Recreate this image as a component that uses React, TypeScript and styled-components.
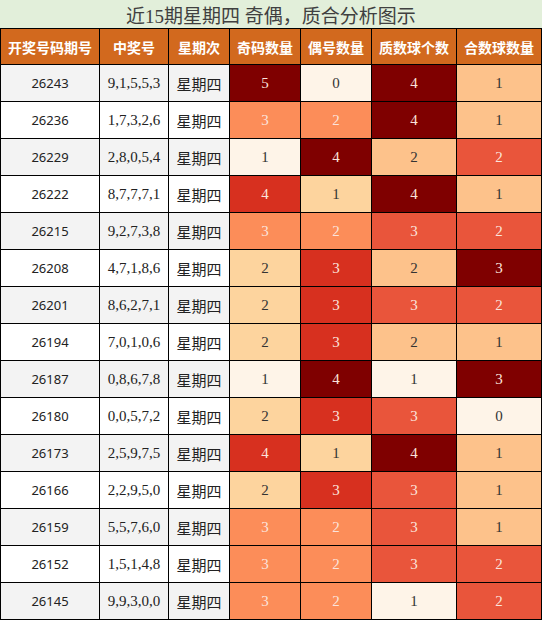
import React from 'react';
import styled, { createGlobalStyle } from 'styled-components';

const Global = createGlobalStyle`
  html, body { margin: 0; padding: 0; background: #fff; }
`;

const Page = styled.div`
  width: 542px;
`;

const Title = styled.div`
  height: 28px;
  background: #e2efda;
  border-bottom: 1px solid #000;
  display: flex;
  align-items: center;
  justify-content: center;
  font-family: "Liberation Serif", "Noto Sans CJK SC", serif;
  font-size: 19px;
  color: #404040;
`;

const Grid = styled.div`
  display: grid;
  grid-template-columns: 98px 68px 60px 70px 70px 84px 84px;
  grid-template-rows: 35px;
  grid-auto-rows: 36px;
  gap: 1px;
  background: #000;
  padding: 0 1px 1px 1px;
`;

const HeadCell = styled.div`
  background: #d2691e;
  color: #fff;
  font-family: "Noto Sans CJK SC", sans-serif;
  font-weight: bold;
  font-size: 14px;
  display: flex;
  align-items: center;
  justify-content: center;
  white-space: nowrap;
`;

type Kind = 'period' | 'nums' | 'day';

const fontFor: Record<Kind, string> = {
  period: `font-family: "Noto Sans", sans-serif; font-size: 13px;`,
  nums: `font-family: "Liberation Serif", serif; font-size: 15px;`,
  day: `font-family: "Noto Sans CJK SC", sans-serif; font-size: 15px;`,
};

const InfoCell = styled.div<{ $alt: boolean; $kind: Kind }>`
  background: ${(p) => (p.$alt ? '#f3f3f3' : '#fff')};
  color: #222;
  display: flex;
  align-items: center;
  justify-content: center;
  white-space: nowrap;
  ${(p) => fontFor[p.$kind]}
`;

const HeatCell = styled.div<{ $bg: string; $light: boolean }>`
  background: ${(p) => p.$bg};
  color: ${(p) => (p.$light ? '#333' : '#fbe3dc')};
  display: flex;
  align-items: center;
  justify-content: center;
  font-family: "Liberation Serif", serif;
  font-size: 15px;
`;

const C = {
  cream: '#fef4e8',
  peach: '#fdd49e',
  lt: '#fdc28b',
  org: '#fc8d59',
  red2: '#e9553b',
  red: '#d7301f',
  dark: '#7f0000',
};
const LIGHT = new Set([C.cream, C.peach, C.lt]);

const maps: Record<number, string>[] = [
  { 1: C.cream, 2: C.peach, 3: C.org, 4: C.red, 5: C.dark },
  { 0: C.cream, 1: C.peach, 2: C.org, 3: C.red, 4: C.dark },
  { 1: C.cream, 2: C.lt, 3: C.red2, 4: C.dark },
  { 0: C.cream, 1: C.lt, 2: C.red2, 3: C.dark },
];

const headers = ['开奖号码期号', '中奖号', '星期次', '奇码数量', '偶号数量', '质数球个数', '合数球数量'];

const rows: [string, string, number[]][] = [
  ['26243', '9,1,5,5,3', [5, 0, 4, 1]],
  ['26236', '1,7,3,2,6', [3, 2, 4, 1]],
  ['26229', '2,8,0,5,4', [1, 4, 2, 2]],
  ['26222', '8,7,7,7,1', [4, 1, 4, 1]],
  ['26215', '9,2,7,3,8', [3, 2, 3, 2]],
  ['26208', '4,7,1,8,6', [2, 3, 2, 3]],
  ['26201', '8,6,2,7,1', [2, 3, 3, 2]],
  ['26194', '7,0,1,0,6', [2, 3, 2, 1]],
  ['26187', '0,8,6,7,8', [1, 4, 1, 3]],
  ['26180', '0,0,5,7,2', [2, 3, 3, 0]],
  ['26173', '2,5,9,7,5', [4, 1, 4, 1]],
  ['26166', '2,2,9,5,0', [2, 3, 3, 1]],
  ['26159', '5,5,7,6,0', [3, 2, 3, 1]],
  ['26152', '1,5,1,4,8', [3, 2, 3, 2]],
  ['26145', '9,9,3,0,0', [3, 2, 1, 2]],
];

export default function App() {
  return (
    <Page>
      <Global />
      <Title>近15期星期四 奇偶，质合分析图示</Title>
      <Grid>
        {headers.map((h) => (
          <HeadCell key={h}>{h}</HeadCell>
        ))}
        {rows.map(([period, nums, vals], i) => {
          const alt = i % 2 === 0;
          return (
            <React.Fragment key={period}>
              <InfoCell $alt={alt} $kind="period">{period}</InfoCell>
              <InfoCell $alt={alt} $kind="nums">{nums}</InfoCell>
              <InfoCell $alt={alt} $kind="day">星期四</InfoCell>
              {vals.map((v, j) => {
                const bg = maps[j][v];
                return (
                  <HeatCell key={j} $bg={bg} $light={LIGHT.has(bg)}>
                    {v}
                  </HeatCell>
                );
              })}
            </React.Fragment>
          );
        })}
      </Grid>
    </Page>
  );
}
